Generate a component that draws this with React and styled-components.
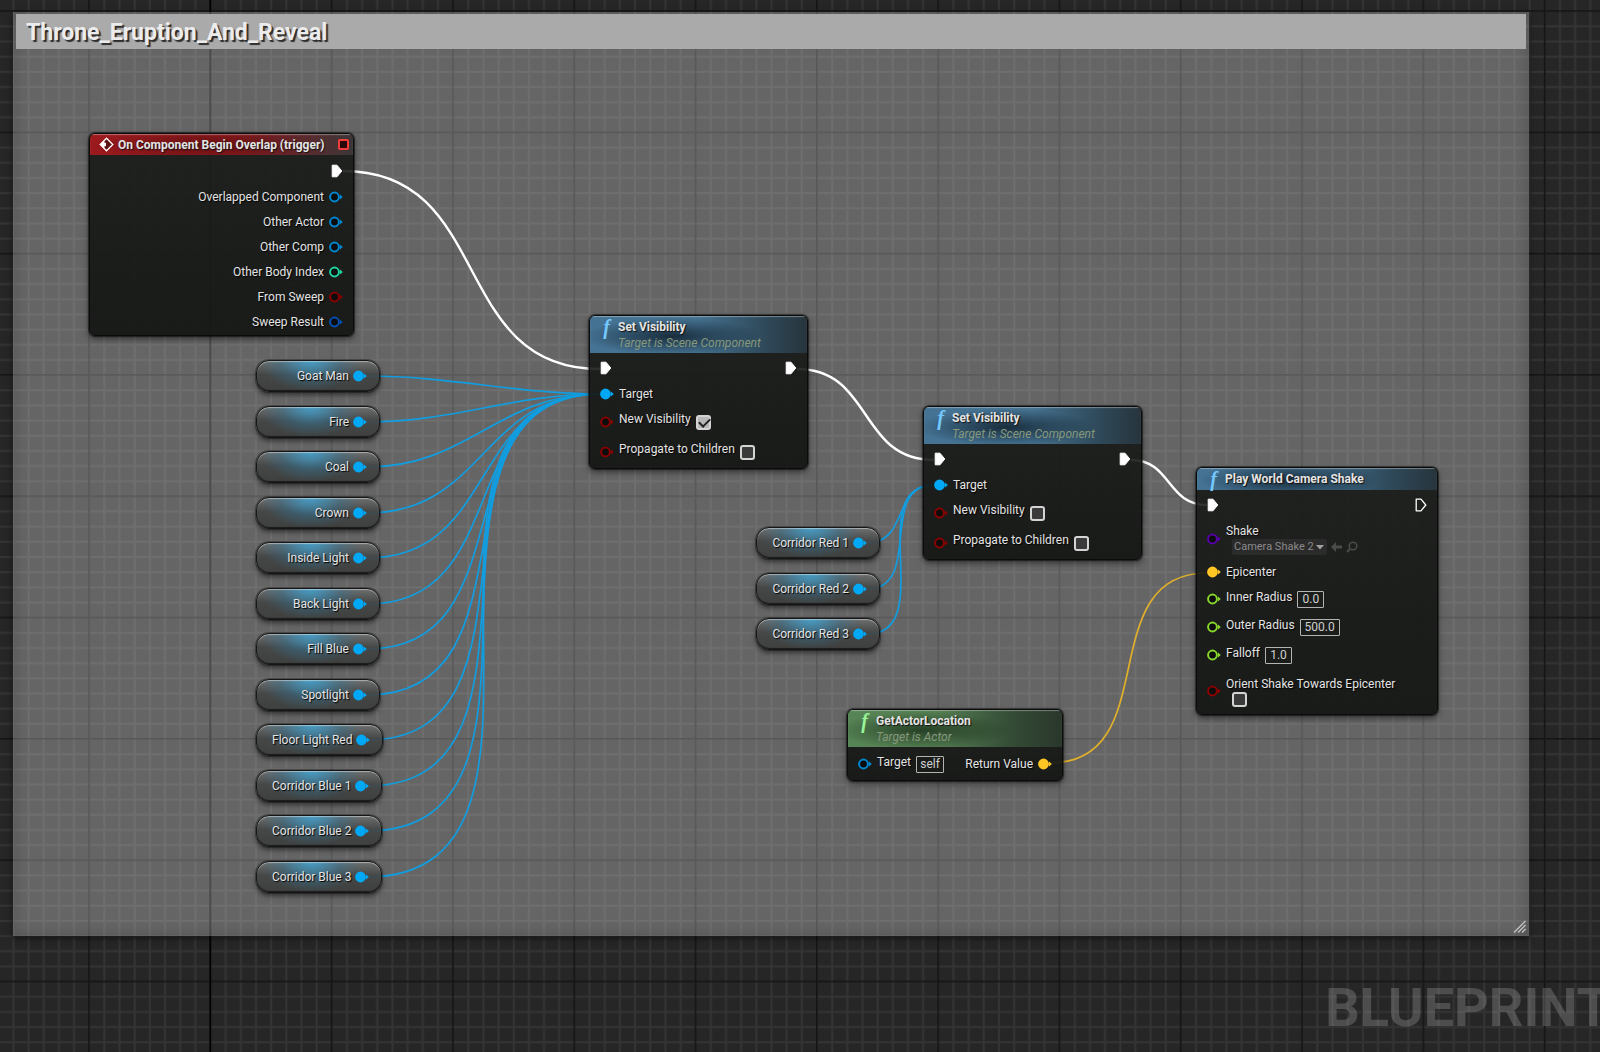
import React, { useId, useState } from "react";
import styled, { createGlobalStyle, css } from "styled-components";

const CELL = 121.3; // one major grid cell, 8 minor cells inside

const colors = {
  exec: "#ffffff",
  object: "#00a8f6",
  objectDim: "#0088d2",
  int: "#1fd6a0",
  bool: "#8b0000",
  struct: "#0050b4",
  klass: "#5800a8",
  float: "#86d62c",
  vector: "#ffc624",
};

const variables = [
  { name: "Goat Man", x: 256, y: 360 },
  { name: "Fire", x: 256, y: 406 },
  { name: "Coal", x: 256, y: 451 },
  { name: "Crown", x: 256, y: 497 },
  { name: "Inside Light", x: 256, y: 542 },
  { name: "Back Light", x: 256, y: 588 },
  { name: "Fill Blue", x: 256, y: 633 },
  { name: "Spotlight", x: 256, y: 679 },
  { name: "Floor Light Red", x: 256, y: 724 },
  { name: "Corridor Blue 1", x: 256, y: 770 },
  { name: "Corridor Blue 2", x: 256, y: 815 },
  { name: "Corridor Blue 3", x: 256, y: 861 },
  { name: "Corridor Red 1", x: 756, y: 527 },
  { name: "Corridor Red 2", x: 756, y: 573 },
  { name: "Corridor Red 3", x: 756, y: 618 },
];

const wires = [
  { from: [343, 171], to: [600, 369], type: "exec" },
  { from: [797, 369], to: [934, 460], type: "exec" },
  { from: [1131, 460], to: [1207, 505], type: "exec" },
  { from: [1050, 763], to: [1207, 573], type: "vector" },
  // every variable goes to the Target pin of its Set Visibility node
  ...variables.map((v) => ({
    from: [v.x + 111, v.y + 16],
    to: v.x < 500 ? [600, 394] : [934, 485],
    type: "object",
  })),
];

// horizontal tangents that grow with the distance in both directions
const wirePath = ({ from, to }) => {
  const t = (Math.abs(to[0] - from[0]) + Math.abs(to[1] - from[1])) / 3;
  return `M${from[0]} ${from[1]} C${from[0] + t} ${from[1]} ${to[0] - t} ${to[1]} ${to[0]} ${to[1]}`;
};

const Grid = () => {
  const minor = [1, 2, 3, 4, 5, 6, 7].map((i) => (i * CELL) / 8);
  return (
    <Layer aria-hidden="true">
      <defs>
        <pattern
          id="grid"
          x="88.2"
          y="10.2"
          width={CELL}
          height={CELL}
          patternUnits="userSpaceOnUse"
        >
          <rect width={CELL} height={CELL} fill="#262626" />
          {minor.map((p) => (
            <g key={p} fill="#343434">
              <rect x={p} y="0" width="2" height={CELL} />
              <rect x="0" y={p} width={CELL} height="2" />
            </g>
          ))}
          <rect width="1.6" height={CELL} fill="#151515" />
          <rect width={CELL} height="1.6" fill="#151515" />
        </pattern>
      </defs>
      <rect width="100%" height="100%" fill="url(#grid)" />
      <rect x="209.5" width="1.6" height="100%" fill="#000" />
    </Layer>
  );
};

const Wires = () => (
  <Layer aria-hidden="true">
    {wires.map((w, i) => (
      <path
        key={i}
        d={wirePath(w)}
        fill="none"
        stroke={w.type === "object" ? "#119ddf" : w.type === "vector" ? "#e0b02c" : "#fff"}
        strokeWidth={w.type === "exec" ? 2.4 : 1.7}
      />
    ))}
  </Layer>
);

const Pin = ({ color, filled }) => (
  <PinSvg width="14" height="12" viewBox="0 0 14 12">
    <circle
      cx="5.5"
      cy="6"
      r="4.4"
      fill={filled ? color : "#0c0c0c"}
      stroke={color}
      strokeWidth="2"
    />
    <path d="M11 3.4 L13.8 6 L11 8.6 Z" fill={color} />
  </PinSvg>
);

const ExecPin = ({ open }) => (
  <PinSvg width="12" height="14" viewBox="0 0 12 14">
    <path
      d="M1.2 1.2 H6 L10.8 7 L6 12.8 H1.2 Z"
      fill={open ? "none" : "#fff"}
      stroke="#fff"
      strokeWidth={open ? 1.3 : 1}
      strokeLinejoin="round"
    />
  </PinSvg>
);

const BoolRow = ({ label, initial = false }) => {
  const id = useId();
  const [checked, setChecked] = useState(initial);
  return (
    <Row $h={30}>
      <Pin color={colors.bool} />
      <Label as="label" htmlFor={id} $raise={6}>
        {label}
      </Label>
      <Check
        id={id}
        type="checkbox"
        checked={checked}
        onChange={(e) => setChecked(e.target.checked)}
      />
    </Row>
  );
};

const FloatRow = ({ label, initial, width }) => {
  const id = useId();
  const [val, setVal] = useState(initial);
  return (
    <Row $h={28}>
      <Pin color={colors.float} />
      <Label as="label" htmlFor={id} $raise={4}>
        {label}
      </Label>
      <Field id={id} type="text" $w={width} value={val} onChange={(e) => setVal(e.target.value)} />
    </Row>
  );
};

const SetVisibility = ({ x, y, visible }) => (
  <Node $x={x} $y={y} $w={219}>
    <Header $tone="blue">
      <FuncIcon>f</FuncIcon>
      <div>
        <Title>Set Visibility</Title>
        <Subtitle>Target is Scene Component</Subtitle>
      </div>
    </Header>
    <Body>
      <Row $h={26} $spread>
        <ExecPin />
        <ExecPin />
      </Row>
      <Row $h={26}>
        <Pin color={colors.object} filled />
        <Label>Target</Label>
      </Row>
      <BoolRow label="New Visibility" initial={visible} />
      <BoolRow label="Propagate to Children" />
    </Body>
  </Node>
);

const EventNode = () => {
  const outputs = [
    ["Overlapped Component", colors.objectDim],
    ["Other Actor", colors.objectDim],
    ["Other Comp", colors.objectDim],
    ["Other Body Index", colors.int],
    ["From Sweep", colors.bool],
    ["Sweep Result", colors.struct],
  ];
  return (
    <Node $x={89} $y={133} $w={265}>
      <Header $tone="red">
        <svg width="15" height="15" viewBox="0 0 15 15">
          <path
            d="M7.5 1.2 L13.8 7.5 L7.5 13.8 L1.2 7.5 Z"
            fill="#5a1212"
            stroke="#fff"
            strokeWidth="1.3"
          />
          <path d="M5.4 3.2 L1 7.5 L5.4 11.8 V9.2 H7 V5.8 H5.4 Z" fill="#fff" />
        </svg>
        <Title>On Component Begin Overlap (trigger)</Title>
        <Delegate />
      </Header>
      <Body>
        <Row $h={27} $end>
          <ExecPin />
        </Row>
        {outputs.map(([name, color]) => (
          <Row $h={25} $end key={name}>
            <Label>{name}</Label>
            <Pin color={color} />
          </Row>
        ))}
      </Body>
    </Node>
  );
};

const ShakeNode = () => {
  const orientId = useId();
  const shakeId = useId();
  return (
    <Node $x={1196} $y={467} $w={242}>
      <Header $tone="blue">
        <FuncIcon>f</FuncIcon>
        <Title>Play World Camera Shake</Title>
      </Header>
      <Body>
        <Row $h={26} $spread>
          <ExecPin />
          <ExecPin open />
        </Row>
        <Row $h={41}>
          <Pin color={colors.klass} />
          <Stack>
            <Label as="label" htmlFor={shakeId}>
              Shake
            </Label>
            <Tools>
              <SelectWrap>
                <Select id={shakeId}>
                  <option>Camera Shake 2</option>
                </Select>
                <svg width="8" height="5" viewBox="0 0 8 5">
                  <path d="M0 0 H8 L4 4.6 Z" fill="#a0a0a0" />
                </svg>
              </SelectWrap>
              <ToolButton aria-label="Use selected">
                <svg width="11" height="10" viewBox="0 0 11 10">
                  <path d="M5 0 V3.4 H11 V6.6 H5 V10 L0 5 Z" fill="#4a4b4a" />
                </svg>
              </ToolButton>
              <ToolButton aria-label="Browse">
                <svg width="12" height="12" viewBox="0 0 12 12">
                  <circle cx="7" cy="5" r="3.8" fill="none" stroke="#4a4b4a" strokeWidth="1.6" />
                  <path d="M4.2 7.8 L1 11" stroke="#4a4b4a" strokeWidth="2" />
                </svg>
              </ToolButton>
            </Tools>
          </Stack>
        </Row>
        <Row $h={26}>
          <Pin color={colors.vector} filled />
          <Label>Epicenter</Label>
        </Row>
        <FloatRow label="Inner Radius" initial="0.0" width={27} />
        <FloatRow label="Outer Radius" initial="500.0" width={40} />
        <FloatRow label="Falloff" initial="1.0" width={27} />
        <Row $h={44}>
          <Pin color={colors.bool} />
          <Stack>
            <Label as="label" htmlFor={orientId}>
              Orient Shake Towards Epicenter
            </Label>
            <Tools>
              <Check id={orientId} type="checkbox" />
            </Tools>
          </Stack>
        </Row>
      </Body>
    </Node>
  );
};

const LocationNode = () => {
  const id = useId();
  const [target, setTarget] = useState("self");
  return (
    <Node $x={847} $y={709} $w={216}>
      <Header $tone="green">
        <FuncIcon $green>f</FuncIcon>
        <div>
          <Title>GetActorLocation</Title>
          <Subtitle>Target is Actor</Subtitle>
        </div>
      </Header>
      <Body>
        <Row $h={30} $spread>
          <Group>
            <Pin color={colors.objectDim} />
            <Label as="label" htmlFor={id} $raise={4}>
              Target
            </Label>
            <Field
              id={id}
              type="text"
              $w={28}
              value={target}
              onChange={(e) => setTarget(e.target.value)}
            />
          </Group>
          <Group>
            <Label>Return Value</Label>
            <Pin color={colors.vector} filled />
          </Group>
        </Row>
      </Body>
    </Node>
  );
};

const App = () => (
  <>
    <GlobalStyles />
    <Canvas>
      <Grid />
      <Comment>
        <CommentTitle>Throne_Eruption_And_Reveal</CommentTitle>
        <Grip width="14" height="14" viewBox="0 0 14 14">
          <path
            d="M1 12.5 L12.5 1 M5 12.5 L12.5 5 M9 12.5 L12.5 9"
            stroke="#c4c4c4"
            strokeWidth="1.3"
          />
        </Grip>
      </Comment>
      <Wires />
      <EventNode />
      <SetVisibility x={589} y={315} visible />
      <SetVisibility x={923} y={406} />
      <ShakeNode />
      <LocationNode />
      {variables.map((v) => (
        <Variable key={v.name} $x={v.x} $y={v.y}>
          <Label>{v.name}</Label>
          <Pin color={colors.object} filled />
        </Variable>
      ))}
      <Watermark>BLUEPRINT</Watermark>
    </Canvas>
  </>
);

const GlobalStyles = createGlobalStyle`
  * {
    box-sizing: border-box;
  }
  body {
    margin: 0;
    background: #262626;
    font-family: Roboto, "Liberation Sans", sans-serif;
    font-size: 12px;
    color: #e4e4e4;
  }
`;
const Canvas = styled.main`
  position: relative;
  min-height: 100vh;
  overflow: hidden;
`;
const Layer = styled.svg`
  position: absolute;
  inset: 0;
  width: 100%;
  height: 100%;
  pointer-events: none;
`;
const Comment = styled.section`
  position: absolute;
  left: 13px;
  top: 12px;
  width: 1516px;
  height: 924px;
  padding: 2px 3px;
  background: rgba(255, 255, 255, 0.29);
  box-shadow:
    0 2px 6px rgba(0, 0, 0, 0.6),
    inset 0 0 16px rgba(0, 0, 0, 0.2);
`;
const CommentTitle = styled.h1`
  margin: 0;
  padding: 3px 10px 0;
  line-height: 32px;
  font-size: 23px;
  font-weight: 700;
  color: #ececec;
  background: #aaaaaa;
  text-shadow: 2px 2px 1px #2c2c2c;
`;
const Grip = styled.svg`
  position: absolute;
  right: 2px;
  bottom: 2px;
`;
const Node = styled.article`
  position: absolute;
  left: ${(p) => p.$x}px;
  top: ${(p) => p.$y}px;
  min-width: ${(p) => p.$w}px;
  border: 1px solid #0b0b0b;
  border-radius: 6px;
  overflow: hidden;
  background: linear-gradient(rgba(22, 24, 22, 0.88), rgba(18, 20, 18, 0.92));
  box-shadow:
    0 0 1px 1px rgba(0, 0, 0, 0.5),
    0 3px 6px rgba(0, 0, 0, 0.5);
`;
const tones = {
  red: css`
    background:
      radial-gradient(ellipse 120px 16px at 45% 55%, rgba(60, 8, 8, 0.55), transparent),
      linear-gradient(90deg, #9c1a1e, #8f1a1e 55%, #5e2a2e 80%, #3c3636);
  `,
  blue: css`
    background:
      radial-gradient(ellipse 90px 18px at 38% 55%, rgba(14, 28, 40, 0.8), transparent),
      linear-gradient(90deg, #457394, #44718f 50%, #2f4a5b 80%, #27343c);
  `,
  green: css`
    background:
      radial-gradient(ellipse 90px 18px at 35% 55%, rgba(20, 40, 20, 0.7), transparent),
      linear-gradient(90deg, #578556, #527a50 45%, #344c36 76%, #2a372c);
  `,
};
const Header = styled.header`
  display: flex;
  align-items: flex-start;
  gap: 4px;
  padding: 3px 4px 2px 9px;
  box-shadow: inset 0 1px 1px rgba(255, 255, 255, 0.35);
  ${(p) => tones[p.$tone]}
`;
const Title = styled.h2`
  margin: 0;
  line-height: 16px;
  font-size: 12px;
  font-weight: 700;
  white-space: nowrap;
  text-shadow: 1px 1px 1px #111;
`;
const Subtitle = styled.p`
  margin: 0;
  line-height: 16px;
  font-style: italic;
  color: #86987c;
`;
const FuncIcon = styled.i`
  width: 15px;
  text-align: center;
  line-height: 17px;
  font-family: "Liberation Serif", serif;
  font-size: 20px;
  font-weight: 700;
  color: ${(p) => (p.$green ? "#98f498" : "#74c8ff")};
`;
const Delegate = styled.span`
  width: 11px;
  height: 11px;
  margin: 2px 0 0 auto;
  border: 2px solid #f43c3c;
  border-radius: 2px;
  background: #2a0808;
`;
const Body = styled.div`
  padding: 2px 10px 1px;
`;
const Row = styled.div`
  display: flex;
  align-items: center;
  gap: 5px;
  height: ${(p) => p.$h}px;
  justify-content: ${(p) => (p.$spread ? "space-between" : p.$end ? "flex-end" : "flex-start")};
`;
const Group = styled.div`
  display: flex;
  align-items: center;
  gap: 5px;
`;
const Stack = styled.div`
  display: flex;
  flex-direction: column;
`;
const Tools = styled.div`
  display: flex;
  align-items: center;
  gap: 4px;
  padding-left: 6px;
`;
const Label = styled.span`
  line-height: 16px;
  padding-bottom: ${(p) => p.$raise || 0}px;
  white-space: nowrap;
  text-shadow: 1px 1px 1px #000;
`;
const PinSvg = styled.svg`
  flex: none;
`;
const Check = styled.input`
  appearance: none;
  width: 15px;
  height: 15px;
  margin: 0;
  border: 2px solid #d4d4d4;
  border-radius: 3px;
  background: #3a3a3a;

  &:checked {
    background: #b8b8b8;
  }
  &:checked::after {
    content: "";
    display: block;
    width: 9px;
    height: 5px;
    margin: 1px;
    border: solid #222;
    border-width: 0 0 2px 2px;
    transform: rotate(-45deg);
  }
`;
const Field = styled.input`
  width: ${(p) => p.$w}px;
  height: 17px;
  padding: 0;
  text-align: center;
  font: inherit;
  color: #d0d0d0;
  background: transparent;
  border: 1px solid #b4b4b4;
  border-radius: 1px;

  &:focus {
    outline: none;
  }
`;
const SelectWrap = styled.span`
  position: relative;
  svg {
    position: absolute;
    right: 3px;
    top: 6px;
    pointer-events: none;
  }
`;
const Select = styled.select`
  appearance: none;
  display: block;
  height: 16px;
  padding: 0 13px 0 2px;
  font: inherit;
  font-size: 11px;
  color: #8a8a8a;
  background: #2a2b2a;
  border: none;
  border-radius: 2px;
`;
const ToolButton = styled.button`
  display: flex;
  padding: 0;
  border: none;
  background: none;
`;
const Variable = styled.article`
  position: absolute;
  left: ${(p) => p.$x}px;
  top: ${(p) => p.$y}px;
  display: flex;
  align-items: center;
  justify-content: flex-end;
  gap: 4px;
  min-width: 124px;
  height: 32px;
  padding: 0 12px 0 15px;
  border: 1px solid #161616;
  border-radius: 13px;
  background:
    radial-gradient(ellipse 50px 30px at 44% 0, rgba(64, 164, 212, 0.85), rgba(50, 120, 155, 0.4) 60%, transparent),
    linear-gradient(rgba(110, 112, 112, 0.9), rgba(66, 68, 68, 0.9) 45%, rgba(58, 60, 58, 0.9));
  box-shadow:
    inset 0 1px 1px rgba(255, 255, 255, 0.45),
    inset 0 -1px 1px rgba(0, 0, 0, 0.6),
    0 0 0 1px rgba(0, 0, 0, 0.3),
    0 3px 5px rgba(0, 0, 0, 0.5);
`;
const Watermark = styled.div`
  position: absolute;
  right: -10px;
  bottom: 12px;
  line-height: 64px;
  font-size: 54px;
  font-weight: 700;
  color: rgba(255, 255, 255, 0.18);
  pointer-events: none;
`;

export default App;
